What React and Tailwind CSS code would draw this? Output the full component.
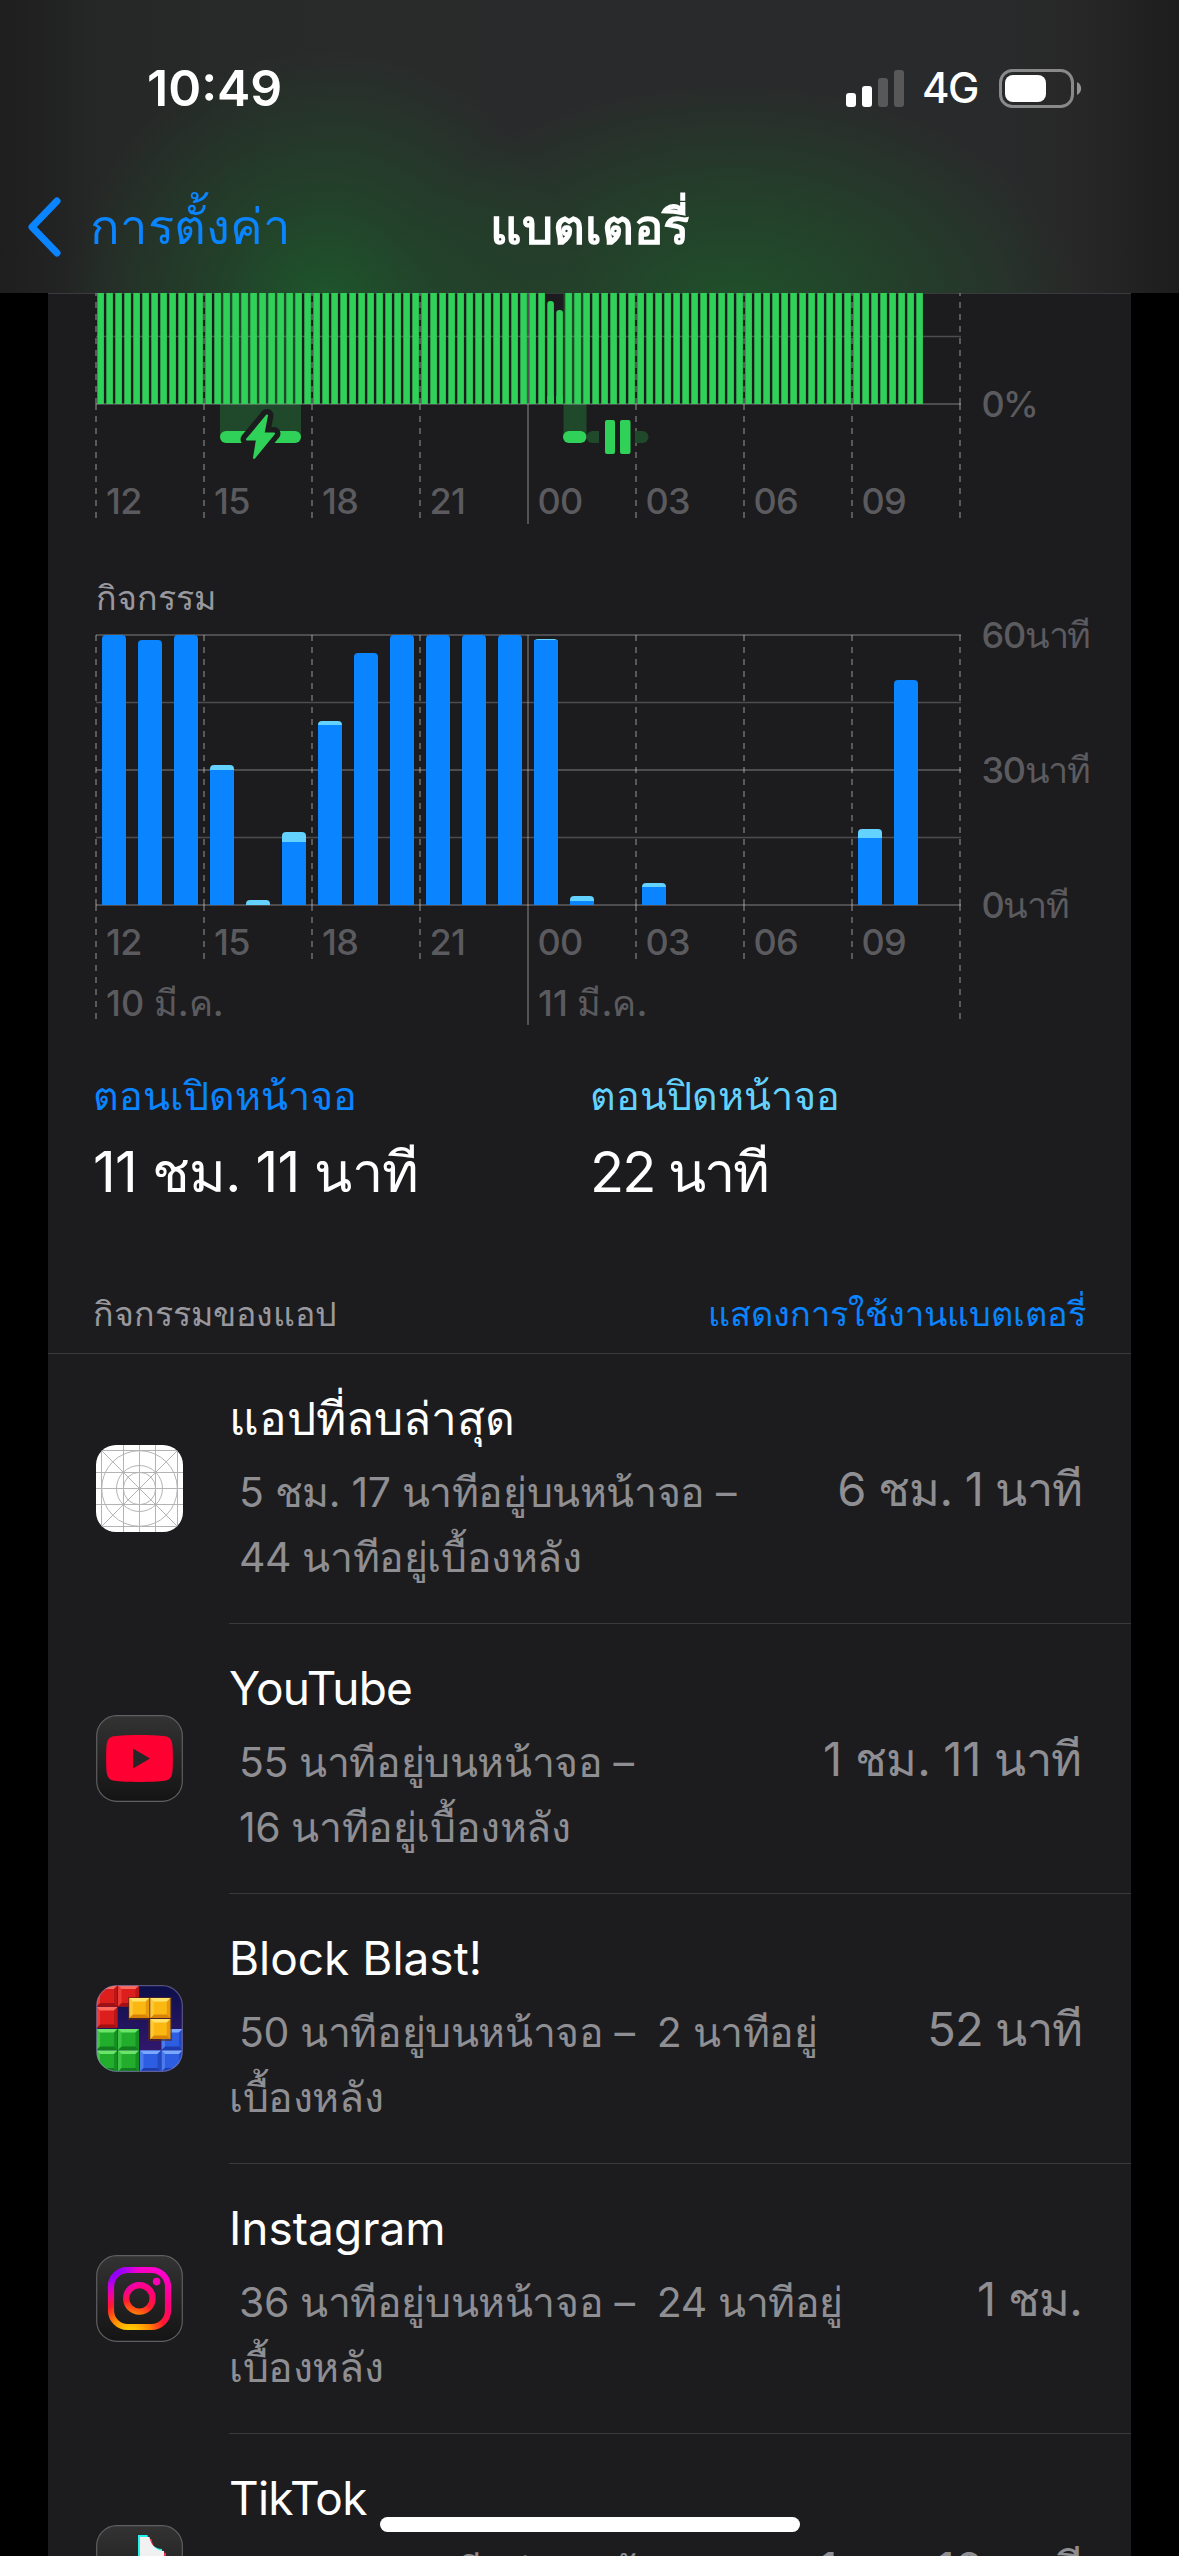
const HOURS = ["12", "15", "18", "21", "00", "03", "06", "09"];

const LEFT = 96;
const RIGHT = 960;

// [hour slot, bar height, height of the screen-off part]
const ACTIVITY = [
  [0, 270, 0],
  [1, 265, 0],
  [2, 270, 0],
  [3, 140, 5],
  [4, 5, 5],
  [5, 73, 10],
  [6, 184, 4],
  [7, 252, 0],
  [8, 270, 0],
  [9, 270, 0],
  [10, 270, 0],
  [11, 270, 0],
  [12, 266, 1],
  [13, 9, 5],
  [15, 22, 4],
  [21, 76, 9],
  [22, 225, 0],
];

function VLine({ x, from, to, offset = 0, solid }) {
  return (
    <line
      x1={x}
      x2={x}
      y1={from}
      y2={to}
      stroke="#ffffff"
      strokeOpacity={solid ? 0.24 : 0.27}
      strokeWidth="2"
      strokeDasharray={solid ? undefined : "6 6"}
      strokeDashoffset={offset}
    />
  );
}

function HLine({ y, w = 2 }) {
  return <line x1={LEFT} x2={RIGHT + 1} y1={y} y2={y} stroke="#ffffff" strokeOpacity="0.22" strokeWidth={w} />;
}

function HourLabels({ y }) {
  return HOURS.map((h, i) => (
    <text key={h} x={(h[0] === "1" ? 106 : 105.5) + i * 108} y={y} className="fill-[#5b5b5f] text-[36px] font-medium tracking-[-0.7px]">
      {h}
    </text>
  ));
}

function LevelChart() {
  const bars = Array.from({ length: 92 }, (_, i) => i);
  const tops = { 50: 301, 51: 310 };
  return (
    <svg viewBox="48 293 1083 276" className="block h-[276px] w-full">
      <rect x="48" y="293" width="1083" height="1" fill="#3a3a3c" />
      <rect x="220" y="293" width="81" height="144" fill="#20482a" />
      <rect x="563.5" y="293" width="23" height="144" fill="#20482a" />
      {[0, 1, 2, 3, 5, 6, 7, 8].map((i) => (
        <g key={i}>
          <VLine x={LEFT + i * 108} from={293} to={404} offset={3} />
          <VLine x={LEFT + i * 108} from={404} to={518} />
        </g>
      ))}
      <VLine x={528} from={293} to={524} solid />
      <HLine y={336.5} w={1.5} />
      <HLine y={404} />
      {bars.map((i) => {
        const top = tops[i];
        return (
          <rect
            key={i}
            x={97.3 + i * 9}
            y={top ?? 293}
            width="6.6"
            height={404 - (top ?? 293)}
            rx={top ? 3 : 0}
            fill="#30d158"
          />
        );
      })}
      <rect x="547.3" y="396" width="6.6" height="8" fill="#30d158" />
      <rect x="556.3" y="396" width="6.6" height="8" fill="#30d158" />
      <rect x="220" y="431" width="81" height="12" rx="6" fill="#30d158" />
      <rect x="563" y="431" width="23.5" height="12" rx="6" fill="#30d158" />
      <rect x="586.5" y="431" width="62" height="12" rx="6" fill="#20482a" />
      <rect x="599" y="420" width="36" height="36" fill="#1c1c1e" />
      <rect x="605" y="420" width="10" height="34" rx="2" fill="#30d158" />
      <rect x="620" y="420" width="10.5" height="34" rx="2" fill="#30d158" />
      <path
        d="M267 415.500L247 439.500H257L254 458L274 433.500H263.500Z"
        fill="#1c1c1e"
        stroke="#1c1c1e"
        strokeWidth="13"
        strokeLinejoin="round"
      />
      <path
        d="M267 415.500L247 439.500H257L254 458L274 433.500H263.500Z"
        fill="#30d158"
        stroke="#30d158"
        strokeWidth="2"
        strokeLinejoin="round"
      />
      <HourLabels y={514} />
      <text x="981.5" y="417" className="fill-[#5b5b5f] text-[36px] font-medium tracking-[-1.8px]">
        0%
      </text>
    </svg>
  );
}

function ActivityBar({ slot, height, light }) {
  const x = 102 + slot * 36;
  const top = 905 - height;
  const r = Math.min(4, height);
  return (
    <g>
      <path
        d={`M${x} 905V${top + r}Q${x} ${top} ${x + r} ${top}H${x + 24 - r}Q${x + 24} ${top} ${x + 24} ${top + r}V905Z`}
        fill={light ? "#64d2ff" : "#0a84ff"}
      />
      {light > 0 && height > light && (
        <rect x={x} y={top + light} width="24" height={height - light} fill="#0a84ff" />
      )}
    </g>
  );
}

function ActivityChart() {
  return (
    <svg viewBox="48 629 1083 411" className="block h-[411px] w-full overflow-visible">
      <HLine y={635} />
      <HLine y={702.5} w={1.5} />
      <HLine y={770} />
      <HLine y={837.5} w={1.5} />
      <HLine y={905} />
      {[0, 1, 2, 3, 5, 6, 7, 8].map((i) => (
        <g key={i}>
          <VLine x={LEFT + i * 108} from={635} to={905} />
          <VLine x={LEFT + i * 108} from={905} to={i % 8 === 0 ? 1019 : 959} />
        </g>
      ))}
      <VLine x={528} from={635} to={1025} solid />
      {ACTIVITY.map(([slot, height, light]) => (
        <ActivityBar key={slot} slot={slot} height={height} light={light} />
      ))}
      <HourLabels y={955} />
      <g className="fill-[#5b5b5f] text-[36px] font-medium">
        <text x="106" y="1016">10 มี.ค.</text>
        <text x="538" y="1016">11 มี.ค.</text>
      </g>
      <g className="fill-[#5b5b5f] text-[36px] font-medium tracking-[-1.3px]">
        <text x="981.5" y="648">60นาที</text>
        <text x="981.5" y="783">30นาที</text>
        <text x="981.5" y="918">0นาที</text>
      </g>
    </svg>
  );
}

const tile = "block size-[87px] shrink-0";

function DarkTile({ id }) {
  return (
    <>
      <defs>
        <linearGradient id={id} x1="0" y1="0" x2="0" y2="1">
          <stop offset="0" stopColor="#333333" />
          <stop offset="1" stopColor="#141414" />
        </linearGradient>
      </defs>
      <rect x="0.7" y="0.7" width="85.600" height="85.600" rx="20" fill={`url(#${id})`} stroke="#5f5f61" strokeWidth="1.200" />
    </>
  );
}

function DeletedAppIcon() {
  const lines = [5.5, 27.5, 43.5, 59.5, 81.5];
  return (
    <svg viewBox="0 0 87 87" className={tile}>
      <clipPath id="gridClip">
        <rect width="87" height="87" rx="20" />
      </clipPath>
      <g clipPath="url(#gridClip)">
        <rect width="87" height="87" fill="#ffffff" />
        <g stroke="#b4b4b6" strokeWidth="1" fill="none">
          {lines.map((p) => (
            <path key={p} d={`M${p} 0V87M0 ${p}H87`} />
          ))}
          <path d="M0 0L87 87M87 0L0 87" />
          <circle cx="43.500" cy="43.500" r="37.800" />
          <circle cx="43.500" cy="43.500" r="23" />
          <circle cx="43.500" cy="43.500" r="16.200" />
        </g>
      </g>
    </svg>
  );
}

function YouTubeIcon() {
  return (
    <svg viewBox="0 0 87 87" className={tile}>
      <DarkTile id="ytTile" />
      <path
        d="M18 21.300C30 19.700 57 19.700 69 21.300C74 22 76 25 76.500 31C77 38 77 49 76.500 56C76 62 74 65 69 65.700C57 67.300 30 67.300 18 65.700C13 65 11 62 10.500 56C10 49 10 38 10.500 31C11 25 13 22 18 21.300Z"
        fill="#ff0033"
      />
      <path d="M37 33.500V53.500L54 43.500Z" fill="#262626" />
    </svg>
  );
}

function Block({ x, y, s = 21, c }) {
  const [base, light, dark] = c;
  return (
    <g>
      <rect x={x} y={y} width={s} height={s} fill={base} />
      <path d={`M${x} ${y}h${s}l-3.500 3.500h-${s - 7}z`} fill={light} />
      <path d={`M${x} ${y + s}h${s}l-3.500 -3.500h-${s - 7}z`} fill={dark} />
      <path d={`M${x + s} ${y}v${s}l-3.500 -3.500v-${s - 7}z`} fill={dark} opacity="0.6" />
      <path d={`M${x} ${y}v${s}l3.500 -3.500v-${s - 7}z`} fill={light} opacity="0.4" />
    </g>
  );
}

function BlockBlastIcon() {
  const red = ["#dc1f1c", "#ff6a5c", "#a01015"];
  const green = ["#22ad2c", "#6be46a", "#117d1e"];
  const blue = ["#2d5de0", "#78a8ff", "#1c3cae"];
  const yellow = ["#fbb812", "#ffe36a", "#d98306"];
  return (
    <svg viewBox="0 0 87 87" className={tile}>
      <defs>
        <clipPath id="bbClip">
          <rect x="0.500" y="0.500" width="86" height="86" rx="20" />
        </clipPath>
        <linearGradient id="bbBg" x1="0" y1="0" x2="0" y2="1">
          <stop offset="0" stopColor="#0c0f48" />
          <stop offset="1" stopColor="#3d1a78" />
        </linearGradient>
      </defs>
      <g clipPath="url(#bbClip)">
        <rect width="87" height="87" fill="url(#bbBg)" />
        <Block x={0.5} y={0.5} c={red} />
        <Block x={22} y={0.5} c={red} />
        <Block x={0.5} y={22} c={red} />
        <Block x={0.5} y={44} c={green} />
        <Block x={22} y={44} c={green} />
        <Block x={0.5} y={65.5} c={green} />
        <Block x={22} y={65.5} c={green} />
        <Block x={65.5} y={44} c={blue} />
        <Block x={44} y={65.5} c={blue} />
        <Block x={65.5} y={65.5} c={blue} />
        <path d="M32 12H76V56H52V35H32Z" fill="#5a2a10" opacity="0.6" />
        <Block x={33.3} y={13} s={20} c={yellow} />
        <Block x={54.3} y={13} s={20} c={yellow} />
        <Block x={54.3} y={34} s={20} c={yellow} />
      </g>
      <rect x="0.700" y="0.700" width="85.600" height="85.600" rx="20" fill="none" stroke="#8a86b8" strokeOpacity="0.550" strokeWidth="1.200" />
    </svg>
  );
}

function InstagramIcon() {
  const shape = (
    <>
      <rect x="15" y="15" width="57" height="57" rx="16.500" />
      <circle cx="43.400" cy="43.400" r="13.200" />
    </>
  );
  return (
    <svg viewBox="0 0 87 87" className={tile}>
      <DarkTile id="igTile" />
      <defs>
        <radialGradient id="igWarm" gradientUnits="userSpaceOnUse" cx="34" cy="80" r="72">
          <stop offset="0.100" stopColor="#ffc800" />
          <stop offset="0.280" stopColor="#ff8a00" />
          <stop offset="0.480" stopColor="#ff1a2e" />
          <stop offset="0.660" stopColor="#ff0078" />
          <stop offset="1" stopColor="#ff00d4" />
        </radialGradient>
        <radialGradient id="igCool" gradientUnits="userSpaceOnUse" cx="16" cy="14" r="36">
          <stop offset="0" stopColor="#7a00ff" />
          <stop offset="0.350" stopColor="#9a00ff" stopOpacity="0.900" />
          <stop offset="1" stopColor="#ff00e0" stopOpacity="0" />
        </radialGradient>
      </defs>
      <g fill="none" stroke="url(#igWarm)" strokeWidth="6.200">{shape}</g>
      <g fill="none" stroke="url(#igCool)" strokeWidth="6.200">{shape}</g>
      <circle cx="60.600" cy="26.600" r="3.800" fill="#ff00b8" />
    </svg>
  );
}

function TikTokIcon() {
  const note = "M44 12H53.500C54.500 20 60 25.500 68 26V36C62 36 57.500 34.500 53.500 31.500V55A17 17 0 1 1 39 38V48A7.500 7.500 0 1 0 44 55Z";
  return (
    <svg viewBox="0 0 87 87" className={tile}>
      <DarkTile id="ttTile" />
      <path d={note} fill="#ff2a55" transform="translate(2 2)" />
      <path d={note} fill="#25f4ee" transform="translate(-2 -2)" />
      <path d={note} fill="#f1f1f1" />
    </svg>
  );
}

const APPS = [
  {
    name: "แอปที่ลบล่าสุด",
    nameClass: "",
    Icon: DeletedAppIcon,
    lines: ["5 ชม. 17 นาทีอยู่บนหน้าจอ –", "44 นาทีอยู่เบื้องหลัง"],
    indent: true,
    total: "6 ชม. 1 นาที",
  },
  {
    name: "YouTube",
    nameClass: "tracking-[-0.8px]",
    Icon: YouTubeIcon,
    lines: ["55 นาทีอยู่บนหน้าจอ –", "16 นาทีอยู่เบื้องหลัง"],
    indent: true,
    total: "1 ชม. 11 นาที",
    totalClass: "tracking-[-0.3px]",
  },
  {
    name: "Block Blast!",
    nameClass: "",
    Icon: BlockBlastIcon,
    lines: ["50 นาทีอยู่บนหน้าจอ –\u00a0 2 นาทีอยู่", "เบื้องหลัง"],
    total: "52 นาที",
  },
  {
    name: "Instagram",
    nameClass: "",
    Icon: InstagramIcon,
    lines: ["36 นาทีอยู่บนหน้าจอ –\u00a0 24 นาทีอยู่", "เบื้องหลัง"],
    total: "1 ชม.",
  },
  {
    name: "TikTok",
    nameClass: "tracking-[-0.8px]",
    Icon: TikTokIcon,
    lines: ["1 ชม. 09 นาทีอยู่บนหน้าจอ –", ""],
    indent: true,
    total: "1 ชม. 10 นาที",
  },
];

function AppRow({ name, nameClass, Icon, lines, indent, total, totalClass = "tracking-[-0.8px]" }) {
  return (
    <li className="flex h-[270px] shrink-0 pl-12">
      <div className="w-[133px] shrink-0 pt-[91px]">
        <Icon />
      </div>
      <div className="flex grow items-center justify-between border-b border-[#3a3a3c] pr-[49px] whitespace-nowrap">
        <div className="h-full pt-[34px]">
          <h3 className={`text-[46px] leading-[60px] text-white ${nameClass}`}>{name}</h3>
          <p className="mt-[12px] flex flex-col text-[41px] leading-[65px] tracking-[-0.4px] text-[#8e8e93]">
            <span className="pl-[10px]">{lines[0]}</span>
            <span className={indent ? "pl-[10px]" : ""}>{lines[1]}</span>
          </p>
        </div>
        <span className={`text-[47px] leading-[60px] text-[#8e8e93] ${totalClass}`}>{total}</span>
      </div>
    </li>
  );
}

function StatusBar() {
  return (
    <div className="flex items-center justify-between pt-[58px] pr-[97px] pl-[147px]">
      <span className="text-[50px] leading-[60px] font-semibold">10:49</span>
      <div className="flex items-center">
        <svg viewBox="0 0 58 37" className="h-[37px] w-[58px]">
          <rect x="0" y="23" width="10" height="14" rx="3" fill="#fff" />
          <rect x="16" y="16" width="10" height="21" rx="3" fill="#fff" />
          <rect x="32" y="8" width="10" height="29" rx="3" fill="#fff" fillOpacity="0.220" />
          <rect x="48" y="0" width="10" height="37" rx="3" fill="#fff" fillOpacity="0.220" />
        </svg>
        <span className="ml-[18px] w-[60px] text-[42px] leading-[60px] font-medium tracking-[-1.5px]">4G</span>
        <svg viewBox="0 0 83 39" className="ml-[17px] h-[39px] w-[83px]">
          <rect x="1.500" y="1.500" width="72" height="36" rx="12" fill="none" stroke="#fff" strokeOpacity="0.450" strokeWidth="3" />
          <rect x="6" y="6" width="41" height="27" rx="8" fill="#fff" />
          <path d="M78 13C83.500 15.500 83.500 23.500 78 26Z" fill="#fff" fillOpacity="0.500" />
        </svg>
      </div>
    </div>
  );
}

export default function App() {
  return (
    <div className="flex h-[2556px] w-[1179px] flex-col overflow-hidden bg-black font-[Inter,sans-serif] text-white">
      <header className="h-[293px] shrink-0 bg-[radial-gradient(ellipse_260px_260px_at_325px_310px,rgba(28,92,44,0.9)_0%,rgba(30,82,42,0.58)_42%,rgba(34,64,40,0)_100%),radial-gradient(ellipse_350px_230px_at_735px_310px,rgba(30,86,42,0.88)_0%,rgba(32,78,42,0.62)_45%,rgba(34,64,40,0)_100%),linear-gradient(to_right,#1d1e1d_0%,#262827_9%,#292b2b_30%,#292a2b_85%,#272727_92%,#1d1d1d_100%)]">
        <StatusBar />
        <nav className="grid h-[175px] grid-cols-3 pt-[69px]">
          <div className="flex h-20 items-center pl-[27px] text-[#0a84ff]">
            <svg viewBox="0 0 34 60" className="h-[60px] w-[34px]">
              <path d="M30 4L5 30L30 56" fill="none" stroke="currentColor" strokeWidth="7" strokeLinecap="round" strokeLinejoin="round" />
            </svg>
            <span className="ml-[29px] text-[49px] leading-[80px]">การตั้งค่า</span>
          </div>
          <h1 className="text-center text-[49px] leading-[80px] font-semibold">แบตเตอรี่</h1>
        </nav>
      </header>

      <main className="mx-12 flex grow flex-col bg-[#1c1c1e]">
        <LevelChart />
        <h2 className="-mt-px mb-px pl-[48px] text-[34px] leading-[60px] text-[#98989e]">กิจกรรม</h2>
        <ActivityChart />

        <section className="flex pt-[26px] pl-[45px]">
          <div className="w-[497px]">
            <p className="text-[39.5px] leading-[60px] text-[#0a84ff]">ตอนเปิดหน้าจอ</p>
            <p className="mt-[6px] text-[56px] leading-[80px] tracking-[-0.8px]">11 ชม. 11 นาที</p>
          </div>
          <div>
            <p className="text-[39.5px] leading-[60px] text-[#64d2ff]">ตอนปิดหน้าจอ</p>
            <p className="mt-[6px] text-[56px] leading-[80px] tracking-[-2px]">22 นาที</p>
          </div>
        </section>

        <div className="mt-[77px] flex h-[65px] shrink-0 items-start justify-between border-b border-[#3a3a3c] pr-[45px] pl-[45px] leading-[50px]">
          <h2 className="text-[34px]/[50px] text-[#98989e]">กิจกรรมของแอป</h2>
          <button className="h-[50px] text-[34.3px]/[50px] text-[#0a84ff]">แสดงการใช้งานแบตเตอรี่</button>
        </div>

        <ul className="flex h-[1202px] shrink-0 flex-col overflow-hidden">
          {APPS.map((app) => (
            <AppRow key={app.name} {...app} />
          ))}
        </ul>
      </main>

      <div className="fixed top-[2517px] left-[380px] h-[15px] w-[420px] rounded-full bg-white" />
    </div>
  );
}
